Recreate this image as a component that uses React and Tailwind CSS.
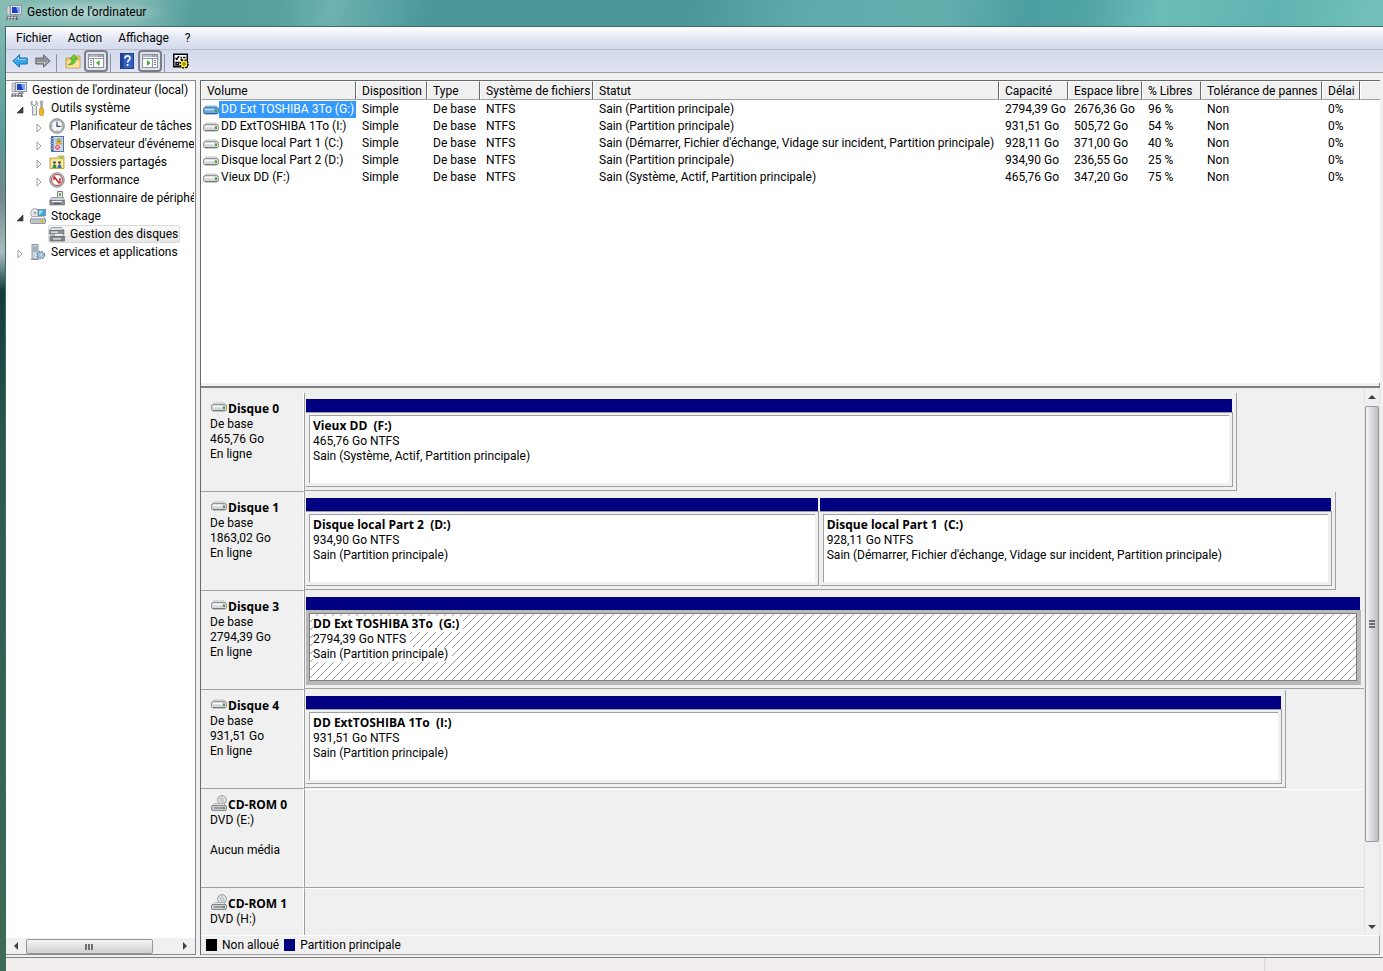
import clsx from 'clsx'

const tree = [
  { label: "Gestion de l'ordinateur (local)", level: 0, icon: ComputerIcon },
  { label: 'Outils système', level: 1, icon: ToolsIcon, open: true },
  { label: 'Planificateur de tâches', level: 2, icon: ClockIcon, closed: true },
  { label: "Observateur d'événements", level: 2, icon: EventIcon, closed: true },
  { label: 'Dossiers partagés', level: 2, icon: SharedIcon, closed: true },
  { label: 'Performance', level: 2, icon: PerfIcon, closed: true },
  { label: 'Gestionnaire de périphériques', level: 2, icon: DeviceIcon },
  { label: 'Stockage', level: 1, icon: StorageIcon, open: true },
  { label: 'Gestion des disques', level: 2, icon: DiskMgmtIcon, selected: true },
  { label: 'Services et applications', level: 1, icon: ServicesIcon, closed: true },
]

const columns = [
  { title: 'Volume', width: 'w-[155px]' },
  { title: 'Disposition', width: 'w-[71px]' },
  { title: 'Type', width: 'w-[53px]' },
  { title: 'Système de fichiers', width: 'w-[113px]' },
  { title: 'Statut', width: 'w-[406px]' },
  { title: 'Capacité', width: 'w-[69px]' },
  { title: 'Espace libre', width: 'w-[74px]' },
  { title: '% Libres', width: 'w-[59px]' },
  { title: 'Tolérance de pannes', width: 'w-[121px]' },
  { title: 'Délai', width: 'w-[38px]' },
]

const volumes = [
  ['DD Ext TOSHIBA 3To (G:)', 'Simple', 'De base', 'NTFS', 'Sain (Partition principale)', '2794,39 Go', '2676,36 Go', '96 %', 'Non', '0%'],
  ['DD ExtTOSHIBA 1To (I:)', 'Simple', 'De base', 'NTFS', 'Sain (Partition principale)', '931,51 Go', '505,72 Go', '54 %', 'Non', '0%'],
  ['Disque local Part 1 (C:)', 'Simple', 'De base', 'NTFS', "Sain (Démarrer, Fichier d'échange, Vidage sur incident, Partition principale)", '928,11 Go', '371,00 Go', '40 %', 'Non', '0%'],
  ['Disque local Part 2 (D:)', 'Simple', 'De base', 'NTFS', 'Sain (Partition principale)', '934,90 Go', '236,55 Go', '25 %', 'Non', '0%'],
  ['Vieux DD (F:)', 'Simple', 'De base', 'NTFS', 'Sain (Système, Actif, Partition principale)', '465,76 Go', '347,20 Go', '75 %', 'Non', '0%'],
]

const disks = [
  {
    name: 'Disque 0', lines: ['De base', '465,76 Go', 'En ligne'], width: 'w-[88%]',
    parts: [{ name: 'Vieux DD  (F:)', size: '465,76 Go NTFS', status: 'Sain (Système, Actif, Partition principale)' }],
  },
  {
    name: 'Disque 1', lines: ['De base', '1863,02 Go', 'En ligne'], width: 'w-[97.4%]',
    parts: [
      { name: 'Disque local Part 2  (D:)', size: '934,90 Go NTFS', status: 'Sain (Partition principale)' },
      { name: 'Disque local Part 1  (C:)', size: '928,11 Go NTFS', status: "Sain (Démarrer, Fichier d'échange, Vidage sur incident, Partition principale)" },
    ],
  },
  {
    name: 'Disque 3', lines: ['De base', '2794,39 Go', 'En ligne'], width: 'w-full',
    parts: [{ name: 'DD Ext TOSHIBA 3To  (G:)', size: '2794,39 Go NTFS', status: 'Sain (Partition principale)', selected: true }],
  },
  {
    name: 'Disque 4', lines: ['De base', '931,51 Go', 'En ligne'], width: 'w-[92.6%]',
    parts: [{ name: 'DD ExtTOSHIBA 1To  (I:)', size: '931,51 Go NTFS', status: 'Sain (Partition principale)' }],
  },
  { name: 'CD-ROM 0', cd: true, lines: ['DVD (E:)', '', 'Aucun média'] },
  { name: 'CD-ROM 1', cd: true, lines: ['DVD (H:)'] },
]

function Svg({ children, className = 'w-4 h-4', box = '0 0 16 16' }) {
  return <svg viewBox={box} className={clsx('shrink-0', className)} aria-hidden="true">{children}</svg>
}

function ComputerIcon() {
  return (
    <Svg>
      <rect x="1" y="1" width="3" height="9" fill="#d4d8dc" stroke="#8a9096" strokeWidth=".6" />
      <rect x="4.5" y="0.5" width="11" height="9" fill="#e3e6ea" stroke="#8d949c" />
      <rect x="6" y="2" width="8" height="6" fill="#1d3fc4" />
      <path d="M10 2h4v6h-2z" fill="#7fa4f4" />
      <path d="M8 10h4l1 2H7z" fill="#9aa0a6" />
      <path d="M1 11.5h10l1 3.500H0z" fill="#5f656b" />
      <path d="M2 12.5h2m1 0h2m1 0h2M1.500 14.200h2m1 0h2m1 0h2" stroke="#e8ebee" />
    </Svg>
  )
}

function ToolsIcon() {
  return (
    <Svg>
      <path d="M2 1v3l2 2 2-2V1c2 1 2.500 4 .5 5.500V15h-4V6.500C.5 5 0 2 2 1z" fill="#e4e6e8" stroke="#84898e" strokeWidth=".8" />
      <path d="M10.500 1h2l.5 2-.7 1v5h-1.600V4l-.7-1z" fill="#aeb3b8" stroke="#7b8085" strokeWidth=".5" />
      <rect x="9.500" y="8" width="4" height="7.500" rx="1.500" fill="#f2b71c" stroke="#b97f0a" strokeWidth=".6" />
    </Svg>
  )
}

function ClockIcon() {
  return (
    <Svg>
      <circle cx="8" cy="8" r="7.300" fill="#b9bdc2" stroke="#70757a" strokeWidth=".8" />
      <circle cx="8" cy="8" r="5.600" fill="#f5f8fb" stroke="#8d939a" strokeWidth=".5" />
      <path d="M8 4v4.300h3.500" fill="none" stroke="#3b4a6b" strokeWidth="1.200" />
      <path d="M8 3v1M8 12v1M3 8h1M12 8h1" stroke="#d7a24c" />
    </Svg>
  )
}

function EventIcon() {
  return (
    <Svg>
      <rect x="2.500" y=".5" width="12" height="15" fill="#c8d9ee" stroke="#54719b" />
      <rect x="2" y="1" width="2.500" height="14" fill="#3f6fae" />
      <path d="M1 2.500h3M1 5h3M1 7.500h3M1 10h3M1 12.500h3" stroke="#9aa3ad" />
      <path d="M6 3h7M6 5h7" stroke="#8ba4c6" />
      <path d="M10 2.500l3 5.500H7z" fill="#f7d12e" stroke="#b4860d" strokeWidth=".6" />
      <path d="M10 4.500v2" stroke="#493500" />
      <circle cx="8.500" cy="11.200" r="2.800" fill="#e0485c" stroke="#fff" strokeWidth=".5" />
      <path d="M7.300 10l2.400 2.400M9.700 10l-2.400 2.400" stroke="#fff" strokeWidth=".9" />
    </Svg>
  )
}

function SharedIcon() {
  return (
    <Svg>
      <path d="M1 14.500V4h7l1.500-2H15v12.500z" fill="#f4d671" stroke="#bd962e" strokeWidth=".8" />
      <path d="M2 5.500h12V14H2z" fill="#fbe9a2" />
      <path d="M10 2.500h4V5h-4z" fill="#8cc96a" />
      <circle cx="5.500" cy="8.500" r="1.300" fill="#2c4a66" />
      <path d="M3.500 14c0-5 4-5 4 0z" fill="#2d8a55" />
      <circle cx="10.500" cy="8.500" r="1.300" fill="#4a3020" />
      <path d="M8.500 14c0-5 4-5 4 0z" fill="#2a6fa8" />
    </Svg>
  )
}

function PerfIcon() {
  return (
    <Svg>
      <circle cx="8" cy="8" r="7.300" fill="#c2c5c9" stroke="#777c81" strokeWidth=".8" />
      <circle cx="8" cy="8" r="5.500" fill="#fff" stroke="#b23434" strokeWidth=".9" />
      <path d="M5 4.500l5.500 7M5 8V5M11 11V6" stroke="#d21f1f" strokeWidth="1.400" />
    </Svg>
  )
}

function DeviceIcon() {
  return (
    <Svg>
      <path d="M8.500 8V1.500h5V8" fill="#e9f1e7" stroke="#7a8086" />
      <rect x="10" y="3" width="2" height="3" fill="#5fae4e" />
      <path d="M2.500 7.500h12l1 3H.8z" fill="#cfd3d7" stroke="#7f858b" strokeWidth=".7" />
      <path d="M.8 10.500h14.700V15H.8z" fill="#868d93" stroke="#5f656b" strokeWidth=".6" />
      <path d="M3 11.500h10" stroke="#eef0f2" strokeWidth="1.200" />
      <path d="M5 13.500h6" stroke="#4a5055" />
    </Svg>
  )
}

function StorageIcon() {
  return (
    <Svg>
      <circle cx="5" cy="5" r="4.400" fill="#e6e9eb" stroke="#888e93" strokeWidth=".7" />
      <circle cx="5" cy="5" r="1.300" fill="#9ba1a6" />
      <rect x="8" y="1.500" width="7.500" height="6" fill="#39aee6" stroke="#6b7b88" strokeWidth=".8" />
      <path d="M9 2.500h4l-3 4H9z" fill="#aee2fa" />
      <path d="M2 8.500h12l1.500 3H.5z" fill="#eceef0" stroke="#8a9095" strokeWidth=".6" />
      <rect x=".5" y="11" width="15" height="4.500" rx="1" fill="#bfc4c8" stroke="#747a80" strokeWidth=".7" />
      <rect x="11" y="12" width="3" height="2.200" fill="#e4c21d" />
    </Svg>
  )
}

function DiskMgmtIcon() {
  return (
    <Svg>
      <path d="M2.500 1.500h10l2.500 3H.5z" fill="#dcdfe1" stroke="#777d82" strokeWidth=".7" />
      <path d="M.5 4.500H15V8H.5z" fill="#8d9398" stroke="#5c6166" strokeWidth=".6" />
      <path d="M6 7.500h7l2.500 3H5z" fill="#eceef0" stroke="#777d82" strokeWidth=".6" />
      <path d="M1 8.500h4v2.500H1z" fill="#b8bcc0" />
      <path d="M1 10.500h14.500V15H1z" fill="#7e8489" stroke="#565b60" strokeWidth=".6" />
      <path d="M2 6.200h7M4 12.800h8" stroke="#eceef0" strokeWidth="1.200" />
    </Svg>
  )
}

function ServicesIcon() {
  return (
    <Svg>
      <path d="M2 .5h6V15H2z" fill="#cfd8de" stroke="#75818b" strokeWidth=".8" />
      <path d="M3 3h4M3 5h4M3 7h4" stroke="#7d8f9b" />
      <path d="M1 15.500h8" stroke="#8b959d" />
      <circle cx="11" cy="11" r="3.300" fill="#a9c6dc" stroke="#5b86a6" strokeWidth="2" strokeDasharray="1.500 1.100" />
      <circle cx="11" cy="11" r="2.600" fill="#b9d2e4" />
      <circle cx="11" cy="11" r="1.200" fill="#fff" stroke="#5b86a6" strokeWidth=".5" />
    </Svg>
  )
}

function DriveIcon({ active }) {
  return (
    <Svg className="w-4 h-3" box="0 0 16 12">
      <path d="M3 2h10l2.500 3H.5z" fill={active ? '#a5cdf3' : '#f0f0f0'} stroke={active ? '#5f98cf' : '#b0b2b3'} strokeWidth=".8" />
      <rect x=".5" y="3.500" width="15" height="6.500" rx="2" fill={active ? '#6ba6dd' : '#d6d8d9'} stroke={active ? '#3f78b0' : '#8a8c8e'} strokeWidth=".9" />
      <path d="M2 5.500h9" stroke={active ? '#b9dafa' : '#fafafa'} strokeWidth="1.500" />
      <path d="M2 9.500h12" stroke={active ? '#2f6498' : '#77797b'} />
      <rect x="12" y="5.500" width="2" height="2.500" fill="#4f9a3c" />
    </Svg>
  )
}

function CdIcon() {
  return (
    <Svg>
      <circle cx="11" cy="5" r="4.400" fill="#e2e4e6" stroke="#85898d" strokeWidth=".8" />
      <path d="M11 1v8M8 2.500l6 5" stroke="#b5b9bc" strokeWidth=".8" />
      <circle cx="11" cy="5" r="1.300" fill="#fff" stroke="#8b8f93" strokeWidth=".6" />
      <path d="M3.500 8.500h9l3 3H.5z" fill="#e6e7e8" stroke="#8d9093" strokeWidth=".6" />
      <rect x=".5" y="10.500" width="15" height="5" rx="1.500" fill="#cdd0d1" stroke="#6d7073" strokeWidth=".8" />
      <path d="M3 13h9" stroke="#5e6265" />
      <rect x="12" y="12" width="2" height="2" fill="#4f9a3c" />
    </Svg>
  )
}

function ArrowIcon({ fill, stroke, flip }) {
  return (
    <Svg className={clsx('w-4 h-4', flip && 'rotate-180')}>
      <path d="M.8 8L7.500 1.800V5h7.700v6H7.500v3.200z" fill={fill} stroke={stroke} strokeLinejoin="round" />
      <path d="M3 7.500l3.500-3v2h7.500" fill="none" stroke="#fff" strokeOpacity=".45" />
    </Svg>
  )
}

function UpFolderIcon() {
  return (
    <Svg>
      <path d="M1 15V5h8l1.500-2H15v12z" fill="#f0cf73" stroke="#bd9337" strokeWidth=".8" />
      <path d="M2 8h12.500v6.500H2z" fill="#f9e3a0" />
      <path d="M3 11.500c3-.5 4.200-2.500 4.200-5.500H5L9 1.500 13 6h-2.300c0 4-2.700 6.500-7.700 5.500z" fill="#6cc936" stroke="#3c9a1d" strokeWidth=".7" />
    </Svg>
  )
}

function PaneIcon({ right }) {
  return (
    <Svg>
      <rect x=".5" y="1.500" width="15" height="13" fill="#fff" stroke="#8f959f" />
      <path d="M1 3h14" stroke="#b3bac6" strokeWidth="2" />
      <path d="M10 3h1m1 0h1m1 0h1" stroke="#5d6b80" />
      <path d="M1 5.500h14" stroke="#8f959f" />
      {right ? <path d="M10.500 6v8" stroke="#8f959f" /> : <path d="M5.500 6v8" stroke="#8f959f" />}
      {right
        ? <path d="M12 7.500h2m-2 2h2m-2 2h2" stroke="#6f7f94" />
        : <path d="M2 7.500h2m-2 2h2m-2 2h2" stroke="#6f7f94" />}
      {right ? <path d="M5 7l3.500 3L5 13z" fill="#3fae2a" /> : <path d="M11.500 7L8 10l3.500 3z" fill="#3fae2a" />}
    </Svg>
  )
}

function HelpIcon() {
  return (
    <Svg>
      <rect x="1.500" y=".5" width="13" height="15" fill="#3560c4" stroke="#1e3f8c" />
      <path d="M2 1h2.500v14H2z" fill="#1f4298" />
      <path d="M6 5.500c0-3.500 5-3.500 5-.3 0 2-2.400 2-2.400 4.300M8.600 11v2" fill="none" stroke="#fff" strokeWidth="1.700" />
    </Svg>
  )
}

function SettingsIcon() {
  return (
    <Svg>
      <rect x=".75" y="1.250" width="13.500" height="12.500" fill="#fff" stroke="#000" strokeWidth="1.500" />
      <path d="M2.500 5l1.300 1.300L6 3M3 9.500h2.500V12H3z" fill="none" stroke="#000" strokeWidth="1.400" />
      <path d="M7.500 4.500H9M10 4.500h2.500M7.500 6.500h2" stroke="#000" strokeWidth="1.500" />
      <circle cx="11" cy="11" r="3.800" fill="#f3e600" stroke="#000" strokeWidth="2" strokeDasharray="1.600 1.400" />
      <circle cx="11" cy="11" r="3.200" fill="#f3e600" />
      <circle cx="11" cy="11" r="1.200" fill="#fff" stroke="#000" strokeWidth=".6" />
    </Svg>
  )
}

function Expander({ open, closed }) {
  if (!open && !closed) return <span className="w-[19px] shrink-0" />
  return (
    <button type="button" aria-label={open ? 'Réduire' : 'Développer'} className="w-[19px] h-4 pl-[5px] pt-[3px] shrink-0">
      <svg viewBox="0 0 10 10" className="w-2.5 h-2.5">
        {open
          ? <path d="M8 2v6H2z" fill="#404040" stroke="#262626" strokeWidth=".6" />
          : <path d="M3 1v8l4-4z" fill="#fff" stroke="#a0a0a0" />}
      </svg>
    </button>
  )
}

function TreeItem({ item }) {
  const Icon = item.icon
  return (
    <li className={clsx('flex items-center h-[18px]', item.level === 2 ? 'pl-[23px]' : 'pl-1')}>
      {item.level > 0 && <Expander open={item.open} closed={item.closed} />}
      <a href="#" className={clsx('flex items-center gap-[5px] h-[18px] pr-px rounded-xs border', item.selected ? 'border-[#d9d9d9] bg-linear-to-b from-[#fafafa] to-[#e6e6e6]' : 'border-transparent')}>
        <Icon />
        <span>{item.label}</span>
      </a>
    </li>
  )
}

function VolumeTable() {
  return (
    <table className="w-full table-fixed border-collapse text-left">
      <colgroup>
        {columns.map(c => <col key={c.title} className={c.width} />)}
        <col />
      </colgroup>
      <thead>
        <tr className="h-5">
          {columns.map(c => (
            <th key={c.title} className="p-0 font-normal align-top">
              <div className="h-[19px] pl-[5px] leading-[18px] bg-[#f0f0f0] border-t border-l border-white border-r border-r-[#696969] border-b border-b-[#a0a0a0]">{c.title}</div>
            </th>
          ))}
          <th className="p-0 align-top"><div className="h-[19px] bg-[#f0f0f0] border-t border-l border-white border-b border-b-[#a0a0a0]" /></th>
        </tr>
      </thead>
      <tbody>
        {volumes.map((v, row) => (
          <tr key={v[0]} className="h-[17px]">
            {v.map((cell, i) => (
              <td key={i} className={clsx('p-0 leading-[17px]', i > 0 && 'pl-1.5')}>
                {i === 0 ? (
                  <div className="flex items-center pl-0.5">
                    <DriveIcon active={row === 0} />
                    <span className={clsx('pl-0.5', row === 0 && 'flex-1 bg-[#3399ff] text-white')}>{cell}</span>
                  </div>
                ) : cell}
              </td>
            ))}
            <td />
          </tr>
        ))}
      </tbody>
    </table>
  )
}

function Hatch() {
  return (
    <svg className="absolute inset-0 w-full h-full" aria-hidden="true">
      <defs>
        <pattern id="hatch" width="8" height="8" patternUnits="userSpaceOnUse">
          <path d="M-1 9L9 -1M-1 1L1 -1M7 9L9 7" stroke="#808080" strokeWidth=".8" />
        </pattern>
      </defs>
      <rect width="100%" height="100%" fill="url(#hatch)" />
    </svg>
  )
}

function Partition({ part }) {
  const label = clsx('w-fit', part.selected && 'bg-white pr-1')
  return (
    <div className="flex-1 min-w-0 flex flex-col">
      <div className="h-[13px] bg-[#000080] border-r border-[#f0f0f0]" />
      <div className={clsx('flex-1 border-t border-r border-b p-[3px] pt-0.5', part.selected ? 'bg-[#b8b8b8] border-[#b8b8b8]' : 'border-[#a0a0a0]')}>
        <div className={clsx('relative h-full border-t border-l border-[#a0a0a0] bg-white pl-[3px] pt-0.5 overflow-hidden', part.selected && 'border-r border-b border-[#808080]!')}>
          {part.selected && <Hatch />}
          <div className="relative leading-[15px] whitespace-pre">
            <div className={clsx(label, "h-4 font-bold font-['Open_Sans','Segoe_UI',sans-serif]")}>{part.name}</div>
            <div className={label}>{part.size}</div>
            <div className={label}>{part.status}</div>
          </div>
        </div>
      </div>
    </div>
  )
}

function DiskRow({ disk }) {
  return (
    <div className="flex h-[99px] shrink-0">
      <div className="w-[103px] shrink-0 border-r border-r-white border-b border-b-[#a0a0a0] pl-[9px] pt-[7px] leading-[15px]">
        <div className="flex h-[17px] items-start pl-px font-bold font-['Open_Sans','Segoe_UI',sans-serif]">
          <span className="flex h-3.5 items-center">{disk.cd ? <CdIcon /> : <DriveIcon />}</span>
          <span className="pl-px leading-[17px]">{disk.name}</span>
        </div>
        {disk.lines.map((l, i) => <div key={i} className="h-[15px]">{l}</div>)}
      </div>
      <div className={clsx('flex-1 min-w-0 border-l border-[#a0a0a0]', disk.cd && 'border-t border-t-white border-b')}>
        {disk.parts && (
          <div className={clsx('flex h-[98px] border-b border-[#a0a0a0] pt-1.5 pb-[3px] pr-[3px]', disk.width, !disk.parts[0].selected && 'border-r')}>
            <div className="flex flex-1 gap-px pl-px">
              {disk.parts.map(p => <Partition key={p.name} part={p} />)}
            </div>
          </div>
        )}
      </div>
    </div>
  )
}

function Arrow({ d, label, className }) {
  return (
    <button type="button" aria-label={label} className={clsx('flex items-center justify-center shrink-0', className)}>
      <svg viewBox="0 0 8 8" className="w-2 h-2"><path d={d} fill="#404040" /></svg>
    </button>
  )
}

function ToolButton({ label, pressed, children }) {
  return (
    <button type="button" aria-label={label}
      className={clsx('flex items-center justify-center h-[22px]', pressed ? 'w-6 rounded-sm border-2 border-[#7b7f8a] bg-[#dfe2ec]' : 'w-[23px]')}>
      {children}
    </button>
  )
}

function Separator() {
  return <span className="w-px h-[18px] ml-0.5 mr-1 bg-[#8c93a5]" />
}

export default function App() {
  return (
    <div className="flex flex-col h-screen overflow-hidden bg-[#5a9f99] text-black text-[12px] leading-[15px] font-['Roboto','Segoe_UI',sans-serif] whitespace-nowrap">
      <header className="h-[26px] shrink-0 bg-[linear-gradient(100deg,#86bcb4_0%,#7fb7b2_10%,#559f9f_14%,#56a0a0_20%,#6eb1b0_24%,#4a989a_31%,#4a989a_50%,#5eabab_58%,#62b0ae_68%,#4c9fa0_74%,#50a3a3_78%,#6cbcb9_84%,#5fb3b0_92%,#74c2bd_100%)]">
        <div className="flex items-center gap-[5px] h-[25px] w-fit pl-1.5 pr-6 bg-[radial-gradient(closest-side,rgba(255,255,255,0.4),transparent)]">
          <ComputerIcon />
          <h1>Gestion de l'ordinateur</h1>
        </div>
      </header>

      <div className="flex flex-1 min-h-0">
        <div className="w-[5px] shrink-0 bg-[linear-gradient(#7fb8b2_0%,#5c9896_12%,#73888b_18%,#a9bcbd_24%,#123c3a_28%,#2c5a50_45%,#3d6b55_100%)]" />
        <div className="flex flex-col flex-1 min-w-0 border-l border-t border-[#3f6a69] bg-[#f0f0f0]">
          {/* Menu */}
          <nav className="flex items-center h-[23px] shrink-0 px-0.5 border-b border-[#b6bccc] bg-linear-to-b from-white via-[#e3e7f3] to-[#d5dbec]">
            {['Fichier', 'Action', 'Affichage', '?'].map(m => (
              <button key={m} type="button" className="px-2">{m}</button>
            ))}
          </nav>

          {/* Toolbar */}
          <div className="flex items-end h-[23px] shrink-0 pl-0.5 border-b border-[#a0a0a0] bg-linear-to-b from-[#d3daec] to-[#e0e4f2]">
            <ToolButton label="Précédent"><ArrowIcon fill="#38a6e8" stroke="#1d6fb4" /></ToolButton>
            <ToolButton label="Suivant"><ArrowIcon fill="#8f9398" stroke="#676b70" flip /></ToolButton>
            <Separator />
            <ToolButton label="Dossier parent"><UpFolderIcon /></ToolButton>
            <ToolButton label="Arborescence" pressed><PaneIcon /></ToolButton>
            <Separator />
            <ToolButton label="Aide"><HelpIcon /></ToolButton>
            <ToolButton label="Volet Actions" pressed><PaneIcon right /></ToolButton>
            <Separator />
            <ToolButton label="Paramètres"><SettingsIcon /></ToolButton>
          </div>

          <main className="flex flex-1 min-h-0 gap-1 pt-[7px] pr-[3px] pb-0.5 border-b border-[#808080]">
            {/* Tree */}
            <aside className="flex flex-col w-[190px] shrink-0 border-t border-r border-b border-[#828790] bg-white">
              <ul className="flex-1 min-h-0 mr-px overflow-hidden">
                {tree.map(item => <TreeItem key={item.label} item={item} />)}
              </ul>
              <div className="flex h-4 shrink-0 bg-[#f0f0f0]">
                <Arrow d="M6 0v8L2 4z" label="Défiler à gauche" className="w-5" />
                <div className="flex-1">
                  <div className="flex items-center justify-center gap-px w-[85%] h-[15px] mt-px rounded-xs border border-[#979797] bg-linear-to-b from-[#f5f5f5] to-[#cfcfd1]">
                    <span className="w-0.5 h-1.5 bg-[#707070]" />
                    <span className="w-0.5 h-1.5 bg-[#707070]" />
                    <span className="w-0.5 h-1.5 bg-[#707070]" />
                  </div>
                </div>
                <Arrow d="M2 0v8l4-4z" label="Défiler à droite" className="w-5" />
              </div>
            </aside>

            <section className="flex flex-col flex-1 min-w-0 border-t border-l border-[#696969]">
              <div className="h-[302px] shrink-0 bg-white overflow-hidden">
                <VolumeTable />
              </div>
              <div className="h-[5px] shrink-0 border-b-2 border-r border-[#808080] bg-[#f0f0f0]" />

              <div className="flex flex-1 min-h-0">
                <div className="flex flex-col flex-1 min-w-0 pt-[5px] overflow-hidden">
                  {disks.map(d => <DiskRow key={d.name} disk={d} />)}
                </div>
                <div className="flex flex-col w-4 shrink-0 border-x border-[#e3e3e3]">
                  <Arrow d="M0 6h8L4 2z" label="Défiler vers le haut" className="h-[18px]" />
                  <div className="flex-1">
                    <div className="flex flex-col items-center justify-center gap-px h-[85%] rounded-xs border border-[#979797] bg-linear-to-r from-[#f5f5f5] to-[#bebec4]">
                      <span className="w-1.5 h-0.5 bg-[#707070]" />
                      <span className="w-1.5 h-0.5 bg-[#707070]" />
                      <span className="w-1.5 h-0.5 bg-[#707070]" />
                    </div>
                  </div>
                  <Arrow d="M0 2h8L4 6z" label="Défiler vers le bas" className="h-4" />
                </div>
              </div>

              {/* Legend */}
              <div className="flex items-center gap-[5px] h-5 shrink-0 pl-[5px] border-t border-t-white border-b border-r border-[#a0a0a0]">
                <span className="w-[11px] h-3 bg-black" />
                <span>Non alloué</span>
                <span className="w-[11px] h-3 bg-[#000080]" />
                <span>Partition principale</span>
              </div>
            </section>
          </main>

          <footer className="flex h-[13px] shrink-0 bg-[#f1edec]">
            <div className="flex-1 border-r border-[#d7d7d7]" />
            <div className="w-[118px]" />
          </footer>
        </div>
      </div>
    </div>
  )
}
